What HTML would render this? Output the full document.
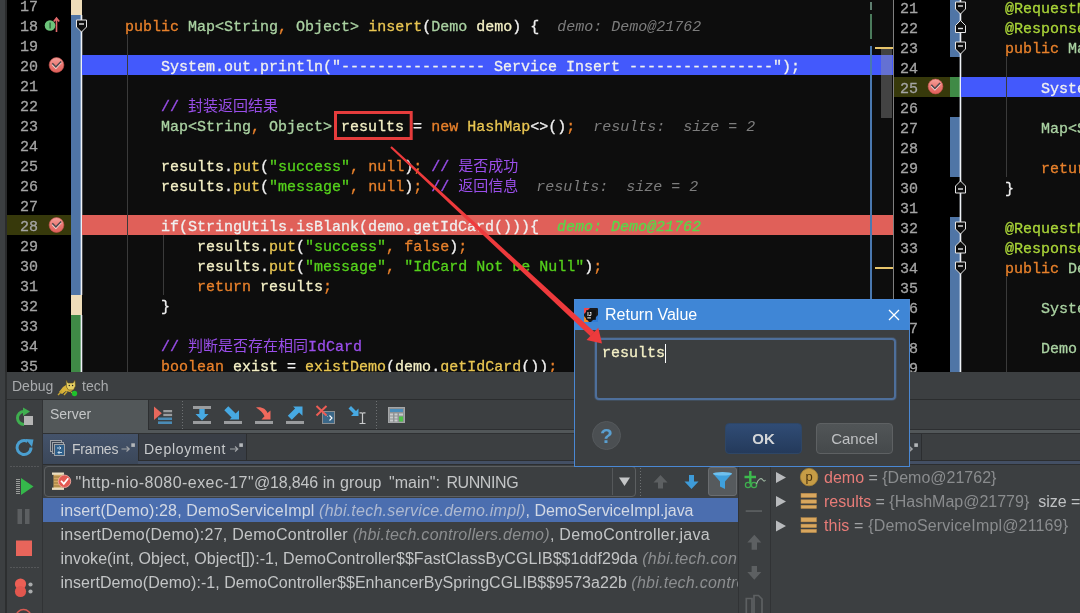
<!DOCTYPE html>
<html><head><meta charset="utf-8"><title>Debug</title>
<style>
*{box-sizing:border-box;margin:0;padding:0}
html,body{width:1080px;height:613px;overflow:hidden;background:#3c3f41}
body{position:relative;font-family:"Liberation Sans","Noto Sans CJK SC",sans-serif;color:#bbb}
.abs{position:absolute}
.mono{font-family:"Liberation Mono","Noto Sans CJK SC",monospace;font-size:15px;line-height:20px;white-space:pre;-webkit-text-stroke-width:0.3px}
/* editors */
#ed1{left:0;top:0;width:894px;height:372px;background:#0d0d0d;overflow:hidden}
#ed2{left:894px;top:0;width:186px;height:372px;background:#0d0d0d;overflow:hidden}
.gut{background:#000}
.ln{color:#a4a4a4}
.ln div,.code div{height:20px}
.k{color:#e8812b}.t{color:#aad2a2}.m{color:#e9c652}.v{color:#f4f0c6}.s{color:#55d11c}.c{color:#9a4eea}.h{color:#7d7d7d;font-style:italic;-webkit-text-stroke-width:0}.z{-webkit-text-stroke-width:0}.a{color:#a9d438}.p{color:#f0f0f0}

.ui14{font-size:14px;line-height:18px;white-space:nowrap}
.ui16{font-size:16px;line-height:24px;white-space:nowrap}
.fr{width:677px;overflow:hidden}
.fr div{height:24px;overflow:hidden}
.fr i{color:#8c8e90}
.vr div{height:24px;color:#a0a2a4}
.vn{color:#e87c78}.vv{color:#8a8c8e}
</style></head><body><div id="root" style="position:absolute;left:0;top:0;width:1080px;height:613px;overflow:hidden;will-change:transform">

<!-- LEFT EDITOR -->
<div id="ed1" class="abs">
  <div class="abs" style="left:0;top:0;width:6px;height:372px;background:#3c3f41"></div>
  <div class="abs" style="left:5px;top:0;width:2px;height:372px;background:#2a2b2c"></div>
  <div class="abs gut" style="left:7px;top:0;width:64px;height:372px"></div>
  <div class="abs" style="left:7px;top:215px;width:64px;height:20px;background:#37390b"></div>
  <!-- stripe -->
  <div class="abs" style="left:71px;top:0;width:11px;height:15px;background:#efddb9"></div>
  <div class="abs" style="left:71px;top:15px;width:10px;height:280px;background:#4f75a6"></div>
  <div class="abs" style="left:71px;top:295px;width:11px;height:20px;background:#efddb9"></div>
  <div class="abs" style="left:71px;top:315px;width:10px;height:57px;background:#3f8a46"></div>
  <div class="abs" style="left:80px;top:15px;width:3px;height:280px;background:linear-gradient(90deg,rgba(235,240,250,.35) 33%,#eef1f6 33%,#eef1f6 67%,rgba(235,240,250,.28) 67%)"></div>
  <div class="abs" style="left:80px;top:315px;width:3px;height:57px;background:linear-gradient(90deg,rgba(235,240,250,.35) 33%,#eef1f6 33%,#eef1f6 67%,rgba(235,240,250,.28) 67%)"></div>
  <!-- highlights -->
  <div class="abs" style="left:82px;top:55px;width:811px;height:20px;background:#4359fc"></div>
  <div class="abs" style="left:82px;top:215px;width:811px;height:20px;background:#e06059"></div>
  <!-- indent guides -->
  <div class="abs" style="left:127px;top:35px;width:1px;height:337px;background:#3a3a3a"></div>
  <div class="abs" style="left:163px;top:235px;width:1px;height:60px;background:#3a3a3a"></div>
  <!-- line numbers -->
  <div class="abs mono ln" style="left:20px;top:-2px"><div>17</div><div>18</div><div>19</div><div>20</div><div>21</div><div>22</div><div>23</div><div>24</div><div>25</div><div>26</div><div>27</div><div>28</div><div>29</div><div>30</div><div>31</div><div>32</div><div>33</div><div>34</div><div>35</div></div>
  <!-- code -->
  <div class="abs mono code p" style="left:89px;top:-2px"><div> </div><div>    <span class="k">public</span> <span class="t">Map&lt;String</span><span class="k">,</span> <span class="t">Object&gt;</span> <span class="m">insert</span>(<span class="t">Demo</span> <span class="v">demo</span>) {  <span class="h">demo: Demo@21762</span></div><div> </div><div>        System.out.println("---------------- Service Insert ----------------");</div><div> </div><div>        <span class="c">// <span class="z">封装返回结果</span></span></div><div>        <span class="t">Map&lt;String</span><span class="k">,</span> <span class="t">Object&gt;</span> <span class="v">results</span> = <span class="k">new</span> <span class="m">HashMap</span>&lt;&gt;()<span class="k">;</span>  <span class="h">results:  size = 2</span></div><div> </div><div>        <span class="v">results</span>.<span class="m">put</span>(<span class="s">"success"</span><span class="k">,</span> <span class="k">null</span>)<span class="k">;</span> <span class="c">// <span class="z">是否成功</span></span></div><div>        <span class="v">results</span>.<span class="m">put</span>(<span class="s">"message"</span><span class="k">,</span> <span class="k">null</span>)<span class="k">;</span> <span class="c">// <span class="z">返回信息</span></span>  <span class="h">results:  size = 2</span></div><div> </div><div>        if(StringUtils.isBlank(demo.getIdCard())){  <span style="color:#58d84a;font-style:italic">demo: Demo@21762</span></div><div>            <span class="v">results</span>.<span class="m">put</span>(<span class="s">"success"</span><span class="k">,</span> <span class="k">false</span>)<span class="k">;</span></div><div>            <span class="v">results</span>.<span class="m">put</span>(<span class="s">"message"</span><span class="k">,</span> <span class="s">"IdCard Not be Null"</span>)<span class="k">;</span></div><div>            <span class="k">return</span> <span class="v">results</span><span class="k">;</span></div><div>        }</div><div> </div><div>        <span class="c">// <span class="z">判断是否存在相同</span>IdCard</span></div><div>        <span class="k">boolean</span> <span class="v">exist</span> = <span class="m">existDemo</span>(<span class="v">demo</span>.<span class="m">getIdCard</span>())<span class="k">;</span></div></div>
  <!-- right marker strip -->
  <div class="abs" style="left:870px;top:2px;width:2px;height:8px;background:#5f7f70"></div>
  <div class="abs" style="left:870px;top:14px;width:2px;height:25px;background:#4b7b5c"></div>
  <div class="abs" style="left:870px;top:46px;width:2px;height:326px;background:#4a78b0"></div>
  <div class="abs" style="left:875px;top:47px;width:18px;height:2px;background:#e6c46a"></div>
  <div class="abs" style="left:881px;top:49px;width:11px;height:69px;background:rgba(150,150,150,.4)"></div>
  <div class="abs" style="left:875px;top:267px;width:18px;height:2px;background:#e6c46a"></div>
  <div class="abs" style="left:893px;top:0;width:1px;height:372px;background:#7e7e7e"></div>
</div>

<!-- RIGHT EDITOR -->
<div id="ed2" class="abs">
  <div class="abs gut" style="left:0;top:0;width:56px;height:372px"></div>
  <div class="abs" style="left:0;top:77px;width:56px;height:20px;background:#37390b"></div>
  <div class="abs" style="left:56px;top:0;width:10px;height:57px;background:#4f75a6"></div>
  <div class="abs" style="left:56px;top:77px;width:10px;height:20px;background:#3f8a46"></div>
  <div class="abs" style="left:56px;top:117px;width:10px;height:60px;background:#4f75a6"></div>
  <div class="abs" style="left:56px;top:217px;width:10px;height:155px;background:#4f75a6"></div>
  <div class="abs" style="left:56px;top:57px;width:10px;height:20px;background:#000"></div>
  <div class="abs" style="left:56px;top:97px;width:10px;height:20px;background:#000"></div>
  <div class="abs" style="left:56px;top:177px;width:10px;height:40px;background:#000"></div>
  <div class="abs" style="left:65px;top:0;width:3px;height:372px;background:linear-gradient(90deg,rgba(235,240,250,.35) 33%,#eef1f6 33%,#eef1f6 67%,rgba(235,240,250,.28) 67%)"></div>
  <div class="abs" style="left:67px;top:77px;width:119px;height:20px;background:#4359fc"></div>
  <div class="abs" style="left:112px;top:57px;width:1px;height:120px;background:#3a3a3a"></div>
  <div class="abs" style="left:112px;top:277px;width:1px;height:95px;background:#3a3a3a"></div>
  <div class="abs mono ln" style="left:6px;top:0px"><div>21</div><div>22</div><div>23</div><div>24</div><div>25</div><div>26</div><div>27</div><div>28</div><div>29</div><div>30</div><div>31</div><div>32</div><div>33</div><div>34</div><div>35</div><div>36</div><div>37</div><div>38</div><div>39</div></div>
  <div class="abs mono code p" style="left:75px;top:0px"><div>    <span class="a">@RequestMapping</span></div><div>    <span class="a">@ResponseBody</span></div><div>    <span class="k">public</span> <span class="t">Map&lt;String</span></div><div> </div><div>        System.out.println</div><div> </div><div>        <span class="t">Map&lt;String</span></div><div> </div><div>        <span class="k">return</span> <span class="v">results</span></div><div>    }</div><div> </div><div>    <span class="a">@RequestMapping</span></div><div>    <span class="a">@ResponseBody</span></div><div>    <span class="k">public</span> <span class="t">Demo</span></div><div> </div><div>        <span class="t">System</span>.out</div><div> </div><div>        <span class="t">Demo</span> <span class="v">demo</span></div><div> </div></div>
</div>


<!-- gutter icons / annotations layer -->
<svg class="abs" style="left:0;top:0" width="1080" height="372" viewBox="0 0 1080 372">
  <defs>
    <linearGradient id="bpg" x1="0" y1="0" x2="0" y2="1"><stop offset="0" stop-color="#f5a29c"/><stop offset=".55" stop-color="#ea7570"/><stop offset="1" stop-color="#e0615c"/></linearGradient>
    <g id="bp"><circle r="7.4" fill="url(#bpg)" stroke="#c9504c" stroke-width=".6"/><path d="M-4.2 -0.6 L-0.6 3.2 L4.6 -2.4" fill="none" stroke="#f8dcd8" stroke-width="1.5"/><path d="M-4.2 -1.8 L-0.6 2 L4.6 -3.6" fill="none" stroke="#4c474c" stroke-width="1.5"/></g>
    <g id="fd"><path d="M-5 -6 H5 V1 L0 6 L-5 1 Z" fill="#0d0d0d" stroke="#e4e4e4" stroke-width="1"/><path d="M-2.5 -2 H2.5" stroke="#e4e4e4" stroke-width="1.4"/></g>
    <g id="fu"><path d="M-5 6 H5 V-1 L0 -6 L-5 -1 Z" fill="#0d0d0d" stroke="#e4e4e4" stroke-width="1"/><path d="M-2.5 2 H2.5" stroke="#e4e4e4" stroke-width="1.4"/></g>
  </defs>
  <use href="#bp" x="56.5" y="65"/>
  <use href="#bp" x="56.5" y="225"/>
  <use href="#bp" x="935.5" y="86.5"/>
  <!-- override icon -->
  <circle cx="50" cy="25.5" r="5.3" fill="#6cc47a"/><rect x="49.2" y="22.5" width="1.8" height="6" fill="#3c7a48"/>
  <path d="M56.5 32 V18.5 M53.8 21.5 L56.5 18 L59.2 21.5" stroke="#e0686a" stroke-width="1.6" fill="none"/>
  <!-- fold markers -->
  <use href="#fd" x="81.5" y="26"/>
  <use href="#fd" x="960.5" y="8"/>
  <use href="#fu" x="960.5" y="26.5"/>
  <use href="#fd" x="960.5" y="48"/>
  <use href="#fu" x="960.5" y="187"/>
  <use href="#fd" x="960.5" y="228"/>
  <use href="#fu" x="960.5" y="247"/>
  <use href="#fd" x="960.5" y="268"/>
</svg>


<!-- DEBUG PANEL -->
<div id="dbg" class="abs" style="left:0;top:372px;width:1080px;height:241px;background:#3c3f41;overflow:hidden">
  <div class="abs" style="left:5px;top:0;width:2px;height:241px;background:#2d2f30"></div>
  <!-- title -->
  <div class="abs ui14" style="left:12px;top:5px;color:#a9abad">Debug</div>
  <div class="abs ui14" style="left:82px;top:5px;color:#a9abad">tech</div>
  <div class="abs" style="left:7px;top:27px;width:1073px;height:1px;background:#2b2d2e"></div>
  <!-- left tool column -->
  <div class="abs" style="left:42px;top:28px;width:1px;height:213px;background:#313335"></div>
  <!-- server tab -->
  <div class="abs" style="left:43px;top:28px;width:1037px;height:33px;background:#525759"></div>
  <div class="abs" style="left:148px;top:28px;width:932px;height:30px;background:#3c3f41;border-left:1px solid #2d2f31;border-bottom:1px solid #2d2f31"></div>
  <div class="abs ui14" style="left:50px;top:33px;color:#c4c6c7">Server</div>
  <!-- tabs row -->
  <div class="abs" style="left:43px;top:61px;width:1037px;height:1px;background:#2f3133"></div>
  <div class="abs" style="left:43px;top:88px;width:1037px;height:1px;background:#2c2e30"></div>
  <div class="abs" style="left:43px;top:89px;width:1037px;height:3px;background:#434f64"></div>
  <div class="abs" style="left:43px;top:92px;width:1037px;height:1px;background:#2c2e30"></div>
  <div class="abs" style="left:43px;top:62px;width:95px;height:30px;background:linear-gradient(#44536b,#3b4759)"></div>
  <div class="abs" style="left:138px;top:62px;width:109px;height:26px;background:#393e46;border-left:1px solid #2c2e30;border-right:1px solid #2c2e30"></div>
  <div class="abs ui14" style="left:72px;top:68px;color:#c8cacc;letter-spacing:-.2px">Frames</div>
  <div class="abs ui14" style="left:144px;top:68px;color:#c8cacc;letter-spacing:.75px">Deployment</div>
  <!-- variables tab stub right of dialog -->
  <div class="abs" style="left:771px;top:62px;width:151px;height:26px;background:#3a3e42;border-right:1px solid #2c2e30"></div>
  <!-- frames panel -->
  <div class="abs" style="left:44px;top:94px;width:592px;height:31px;border:1px solid #5c5f61;border-radius:4px;background:#3c3f41"></div>
  <div class="abs" style="left:612px;top:96px;width:1px;height:27px;background:#55585a"></div>
  <div class="abs ui16" style="left:0;top:99px;width:600px;height:24px;color:#c3c5c6"><span class="abs" style="left:75.6px;letter-spacing:.46px">"http-nio-8080-exec-17"</span><span class="abs" style="left:253.9px;letter-spacing:-.15px">@18,846</span><span class="abs" style="left:322.8px">in</span><span class="abs" style="left:340px;letter-spacing:.1px">group</span><span class="abs" style="left:388.9px;letter-spacing:.1px">"main":</span><span class="abs" style="left:446.4px;letter-spacing:-.4px">RUNNING</span></div>
  <div class="abs" style="left:43px;top:126px;width:695px;height:24px;background:#4b6eaf"></div>
  <div class="abs ui16 fr" style="left:60.5px;top:127px;color:#c3c5c6">
    <div style="color:#d2d8e4"><span style="letter-spacing:.13px">insert(Demo):28, DemoServiceImpl </span><i style="color:#aeb9d0;letter-spacing:.23px">(hbi.tech.service.demo.impl)</i><span style="letter-spacing:-.05px">, DemoServiceImpl.java</span></div>
    <div><span style="letter-spacing:.26px">insertDemo(Demo):27, DemoController </span><i style="letter-spacing:.29px">(hbi.tech.controllers.demo)</i><span style="letter-spacing:.3px">, DemoController.java</span></div>
    <div><span style="letter-spacing:.06px">invoke(int, Object, Object[]):-1, DemoController$$FastClassByCGLIB$$1ddf29da </span><i style="letter-spacing:.25px">(hbi.tech.controllers.demo)</i></div>
    <div><span style="letter-spacing:.05px">insertDemo(Demo):-1, DemoController$$EnhancerBySpringCGLIB$$9573a22b </span><i style="letter-spacing:.25px">(hbi.tech.controllers.demo)</i></div>
  </div>
  <!-- filter btn -->
  <div class="abs" style="left:708px;top:95px;width:29px;height:29px;background:#565a5d;border:1px solid #6a6d70;border-radius:3px"></div>
  <!-- vertical tool col between frames and vars -->
  <div class="abs" style="left:738px;top:93px;width:33px;height:148px;background:#3c3f41;border-left:1px solid #313335;border-right:1px solid #313335"></div>
  <!-- variables -->
  <div class="abs ui16 vr" style="left:824px;top:94px">
    <div><span class="vn">demo</span> = <span class="vv">{Demo@21762}</span></div>
    <div><span class="vn">results</span> = <span class="vv">{HashMap@21779}</span>&nbsp; <span style="color:#c0c2c4">size = 2</span></div>
    <div style="letter-spacing:.15px"><span class="vn">this</span> = <span class="vv">{DemoServiceImpl@21169}</span></div>
  </div>
</div>



<!-- debug icons -->
<svg class="abs" style="left:0;top:372px" width="1080" height="241" viewBox="0 372 1080 241">
  <!-- tomcat -->
  <g>
    <path d="M59 392 L63 387 L66 385 L70 384 L73 386 L73 390 L70 392 L66 391 L62 394 Z" fill="#d9b33a"/>
    <path d="M66 380 L68 383 H73 L75 380 L75.5 386 L73.5 390 H68.5 L66.5 387 Z" fill="#e6cf62" stroke="#5a4a18" stroke-width=".6"/>
    <circle cx="69.3" cy="385.5" r=".7" fill="#222"/><circle cx="72.6" cy="385.5" r=".7" fill="#222"/>
    <path d="M58 395 L62 391 M64 395 L67 391.5 M71 392 L74 394" stroke="#c9a630" stroke-width="1.4"/>
    <circle cx="74.5" cy="393.5" r="2.7" fill="#1fc22c"/>
  </g>
  <!-- rerun -->
  <path d="M24 411.5 a6.5 6.5 0 1 0 0 13" fill="none" stroke="#3fae4f" stroke-width="3"/>
  <path d="M23 407.5 L30 411.5 L23 416 Z" fill="#3fae4f"/>
  <rect x="24" y="416" width="9" height="9" fill="#b4b4b4"/>
  <!-- update -->
  <path d="M31 447.5 a7 7 0 1 1 -3.5 -6" fill="none" stroke="#4a9fd0" stroke-width="3"/>
  <path d="M25.5 439 L33.5 439.5 L32 447 Z" fill="#4a9fd0"/>
  <!-- dotted sep -->
  <path d="M10.5 466.5 H39" stroke="#6e7173" stroke-width="1" stroke-dasharray="1 2"/>
  <path d="M10.5 567.5 H39" stroke="#6e7173" stroke-width="1" stroke-dasharray="1 2"/>
  <!-- resume -->
  <path d="M16 479.5 H20 M16 481.5 H20 M16 483.5 H20 M16 485.5 H20 M16 487.5 H20 M16 489.5 H20 M16 491.5 H20 M16 493.5 H20" stroke="#9a9c9a" stroke-width="1"/>
  <path d="M21 478 L33.5 486.5 L21 495 Z" fill="#35b84b"/>
  <!-- pause -->
  <rect x="17.5" y="509" width="4.5" height="15" fill="#5c5f61"/><rect x="25" y="509" width="4.5" height="15" fill="#5c5f61"/>
  <!-- stop -->
  <rect x="16" y="540.5" width="16" height="15.5" fill="#e8655b"/>
  <!-- breakpoints -->
  <circle cx="20.5" cy="584" r="5.6" fill="#ec5f55"/><circle cx="20.5" cy="591.5" r="5.6" fill="#e2574e"/>
  <circle cx="30.5" cy="584.5" r="2.1" fill="#a9abac"/><circle cx="30.5" cy="591.5" r="2.1" fill="#a9abac"/>
  <!-- mute bp (partial) -->
  <circle cx="23.5" cy="617" r="7.5" fill="none" stroke="#d85a52" stroke-width="1.6"/>
  <!-- frames tab icon -->
  <g fill="#3c4654" stroke="#9fa3a8" stroke-width="1">
    <rect x="50.5" y="440.5" width="11" height="11"/><rect x="52.5" y="442.5" width="11" height="11"/><rect x="54.5" y="444.5" width="10" height="11" fill="#2f5f8a"/>
  </g>
  <path d="M57 448 L61 448 M59.5 446.5 L61 448 L59.5 449.5 M62 452.5 L58 452.5 M59.5 451 L58 452.5 L59.5 454" stroke="#d0e4f4" stroke-width=".9" fill="none"/>
  <!-- pin arrows after tab text -->
  <g stroke="#a0a3a6" stroke-width="1.1" fill="#b4b7ba">
    <path d="M121.5 449 H129 M126.5 446.5 L129.3 449 L126.5 451.5" fill="none"/><rect x="131.3" y="443.3" width="3.6" height="3.6" stroke="none"/>
    <path d="M230 449 H237.5 M235 446.5 L237.8 449 L235 451.5" fill="none"/><rect x="239.3" y="443.3" width="3.6" height="3.6" stroke="none"/>
    <path d="M905 449 L912 449 M909.5 446.5 L912.3 449 L909.5 451.5" fill="none"/><rect x="914.3" y="443.3" width="3.6" height="3.6" stroke="none"/>
  </g>
  <!-- toolbar: show exec point -->
  <path d="M154 406.5 L161.8 413.2 L154 420 Z" fill="#e8685c"/>
  <rect x="163.3" y="410" width="8.8" height="2.3" fill="#9a9c9e"/><rect x="163.3" y="413.8" width="8.8" height="2.3" fill="#9a9c9e"/>
  <rect x="158" y="417.5" width="14" height="2.5" fill="#4b8bb5"/><rect x="158" y="421.4" width="14" height="2.6" fill="#4b8bb5"/>
  <path d="M182.5 401 V429 M376.5 401 V429 M640.5 468 V496" stroke="#6e7173" stroke-width="1" stroke-dasharray="1 2"/>
  <!-- step over -->
  <rect x="193" y="406" width="18" height="3" fill="#9a9c9e"/><rect x="193" y="421" width="18" height="3" fill="#9a9c9e"/>
  <path d="M199.3 409 H204.7 V414 H208.5 L202 420.6 L195.5 414 H199.3 Z" fill="#47a9e2"/>
  <!-- step into -->
  <rect x="224" y="421" width="18" height="3" fill="#9a9c9e"/>
  <path d="M224.3 410.3 L228.3 406.3 L235.6 413.6 L239 410.2 V419.6 H229.6 L231.6 417.6 Z" fill="#47a9e2"/>
  <!-- force step into -->
  <rect x="255" y="421" width="18" height="3" fill="#9a9c9e"/>
  <path d="M256 407.5 C262 406.5 266 409 267.5 413 L270.5 410.5 V419.5 H261.5 L264.5 416.2 C263 412.5 260 410.5 256 407.5 Z" fill="#f0695c"/>
  <!-- step out -->
  <rect x="286" y="421" width="18" height="3" fill="#9a9c9e"/>
  <path d="M287.8 415.7 L291.8 419.7 L299.1 412.4 L302.5 415.8 V406.4 H293.1 L295.1 408.4 Z" fill="#47a9e2"/>
  <!-- drop frame -->
  <rect x="322.5" y="411.5" width="12" height="12" fill="#3a6788" stroke="#8d9092" stroke-width="1"/>
  <path d="M329.5 415.5 L332 418 L329.5 420.5" stroke="#fff" stroke-width="1.1" fill="none"/><path d="M325.5 414.5 L327.5 416.5" stroke="#cfe0ee" stroke-width="1" stroke-dasharray="1 1"/>
  <path d="M316.5 406 L326.5 415.5 M326.5 406 L316.5 415.5" stroke="#ee5d55" stroke-width="2" fill="none"/>
  <!-- run to cursor -->
  <path d="M348.5 408.5 L351 406 L356 411 L358.5 408.5 V416 H351 L353.5 413.5 Z" fill="#47a9e2"/>
  <path d="M359.5 412.8 H361.5 Q362.5 412.8 362.5 414 V422.5 Q362.5 423.5 361.5 423.5 H359.5 M365.5 412.8 H363.5 Q362.5 412.8 362.5 414 M365.5 423.5 H363.5 Q362.5 423.5 362.5 422.5" stroke="#c8cacb" stroke-width="1.2" fill="none"/>
  <!-- calculator -->
  <rect x="388.5" y="407.5" width="16" height="15" fill="#8f9294" stroke="#a4a6a8" stroke-width="1"/>
  <rect x="390" y="409" width="13" height="3" fill="#4a8dbb"/>
  <g fill="#c9cbcc"><rect x="390" y="413.5" width="3" height="2"/><rect x="394.5" y="413.5" width="3" height="2"/><rect x="399" y="413.5" width="4" height="2"/><rect x="390" y="416.5" width="3" height="2"/><rect x="394.5" y="416.5" width="3" height="2"/><rect x="390" y="419.5" width="3" height="2"/><rect x="394.5" y="419.5" width="3" height="2"/></g>
  <rect x="399" y="416.5" width="4" height="5" fill="#4cc247"/>
  <!-- thread icon -->
  <g>
    <rect x="53.5" y="474" width="9" height="14.5" fill="#d2a862"/><rect x="52" y="472.5" width="12" height="2.3" fill="#e9dcc0"/><rect x="52" y="487.6" width="12" height="2.3" fill="#e9dcc0"/>
    <path d="M53.5 477 H62.5 M53.5 480 H62.5 M53.5 483 H62.5 M53.5 486 H62.5" stroke="#8a6a34" stroke-width=".8"/>
    <circle cx="64.5" cy="481.3" r="6.2" fill="#e45a52" stroke="#f0a8a2" stroke-width=".9"/>
    <path d="M61 480.8 L63.8 483.9 L68.3 478.3" stroke="#fff" stroke-width="1.7" fill="none"/>
  </g>
  <!-- dropdown arrow -->
  <path d="M619 477.5 H630 L624.5 486 Z" fill="#c4c6c7"/>
  <!-- up/down/filter -->
  <path d="M660.5 475 L667.5 482.5 H663 V488.5 H658 V482.5 H653.5 Z" fill="#5d6062"/>
  <path d="M691.5 489 L698.5 481.5 H694 V475 H689 V481.5 H684.5 Z" fill="#3e9bd8"/>
  <path d="M713 473.5 H732 L725 481.5 V489 L720 486.5 V481.5 Z" fill="#3fa0dc"/>
  <ellipse cx="722.5" cy="473.8" rx="9.5" ry="1.8" fill="#6fc0ee"/>
  <!-- vertical col icons -->
  <path d="M750.3 471 V483.5 M744.5 477 H756" stroke="#3dbb4e" stroke-width="2.4"/>
  <circle cx="748" cy="485" r="2.6" fill="none" stroke="#3fae4f" stroke-width="1.3"/><circle cx="754" cy="485" r="2.6" fill="none" stroke="#3fae4f" stroke-width="1.3"/>
  <path d="M756.5 484 C758 479 761 477.5 762.5 479.5 C763.5 481 764 482 765.5 480" stroke="#9fb8a2" stroke-width="1.1" fill="none"/>
  <rect x="745.7" y="510.2" width="16.3" height="1.7" fill="#5d6062"/>
  <path d="M754.3 534.8 L761.3 542.5 H757 V549.8 H751.6 V542.5 H747.3 Z" fill="#5d6062"/>
  <path d="M754.3 579.8 L761.3 572 H757 V566 H751.6 V572 H747.3 Z" fill="#5d6062"/>
  <path d="M746.3 598.5 H752 V616 H746.3 Z M754 595.5 H758.5 L762 599 V616 H754 Z" fill="none" stroke="#5d6062" stroke-width="1.7"/>
  <!-- tree arrows -->
  <path d="M776 472 L786 477.5 L776 483 Z M776 496 L786 501.5 L776 507 Z M776 520.5 L786 526 L776 531.5 Z" fill="#b9bbbd"/>
  <!-- p icon -->
  <circle cx="809.1" cy="477.1" r="8.7" fill="#c69c46" stroke="#a98536" stroke-width=".8"/>
  <text x="809.2" y="481.3" text-anchor="middle" font-family="Liberation Sans,sans-serif" font-size="13" fill="#4a3410">p</text>
  <!-- field icons -->
  <g fill="#d9a75e" stroke="#b98a48" stroke-width=".5"><rect x="801" y="493.3" width="15.5" height="4.2"/><rect x="801" y="499.8" width="15.5" height="3.5"/><rect x="801" y="505.2" width="15.5" height="3.3"/>
  <rect x="801" y="517.7" width="15.5" height="4.2"/><rect x="801" y="524.1" width="15.5" height="3.5"/><rect x="801" y="529.3" width="15.5" height="3.3"/></g>
</svg>

<!-- DIALOG -->
<div id="dlg" class="abs" style="left:574px;top:299px;width:336px;height:168px;background:#3c3f41;border:1px solid #4a88d4">
  <div class="abs" style="left:0;top:0;width:334px;height:30px;background:#3f86d6"></div>
  <div class="abs" style="left:30px;top:3px;font-size:16px;line-height:24px;color:#fff;white-space:nowrap">Return Value</div>
  <svg class="abs" style="left:8px;top:7px" width="16" height="16" viewBox="0 0 16 16"><rect x="1" y="1" width="14" height="14" rx="1" fill="#1a1a1c"/><path d="M1 1 H7 L1 7 Z" fill="#f0484c"/><path d="M15 8 V15 H8 Z" fill="#2f7bd6"/><path d="M1 9 L1 15 H6 Z" fill="#f28c28"/><rect x="3.2" y="3.2" width="9.6" height="9.6" fill="#111"/><rect x="4.3" y="10.4" width="3.6" height="1" fill="#fff"/><text x="4.2" y="8.6" font-family="Liberation Sans,sans-serif" font-size="5.2" font-weight="bold" fill="#fff">IJ</text></svg>
  <svg class="abs" style="left:313px;top:9px" width="13" height="13" viewBox="0 0 13 13"><path d="M1 1 L11 11 M11 1 L1 11" stroke="#fff" stroke-width="1.3" fill="none"/></svg>
  <!-- text area -->
  <div class="abs" style="left:20px;top:38px;width:301px;height:62px;border:2px solid #4e6f9b;border-radius:4px;background:#3b3e40;box-shadow:0 0 0 1px rgba(78,111,155,.3)"></div>
  <div class="abs mono v" style="left:27px;top:44px">results</div>
  <div class="abs" style="left:90px;top:44px;width:1px;height:19px;background:#fff"></div>
  <!-- help -->
  <div class="abs" style="left:17px;top:121px;width:29px;height:29px;border-radius:15px;background:#4b4f52;border:1px solid #55595c"></div>
  <div class="abs" style="left:17px;top:121px;width:29px;height:29px;text-align:center;font-size:21px;line-height:29px;font-weight:bold;color:#5a9fd0">?</div>
  <!-- OK -->
  <div class="abs" style="left:150px;top:123px;width:77px;height:31px;border-radius:4px;border:1px solid #2e4666;background:linear-gradient(#304c75,#243a5b);text-align:center;font-size:15px;line-height:29px;font-weight:bold;color:#d4d6d8">OK</div>
  <!-- Cancel -->
  <div class="abs" style="left:241px;top:123px;width:77px;height:31px;border-radius:4px;border:1px solid #5e6163;background:linear-gradient(#515557,#45494b);text-align:center;font-size:15px;line-height:29px;color:#bfc1c3">Cancel</div>
</div>

<!-- annotation overlay -->
<svg class="abs" style="left:0;top:0" width="1080" height="613" viewBox="0 0 1080 613">
  <rect x="335.5" y="112.5" width="75.7" height="26" fill="none" stroke="#e53c3c" stroke-width="3"/>
  <path d="M390.3 147.7 L391.7 146.3 L594.5 332 L590.5 336.3 Z" fill="#ee3a3c"/>
  <path d="M602 343.5 L586.5 340 L598.3 327.8 Z" fill="#ee3a3c"/>
</svg>

</div></body></html>
